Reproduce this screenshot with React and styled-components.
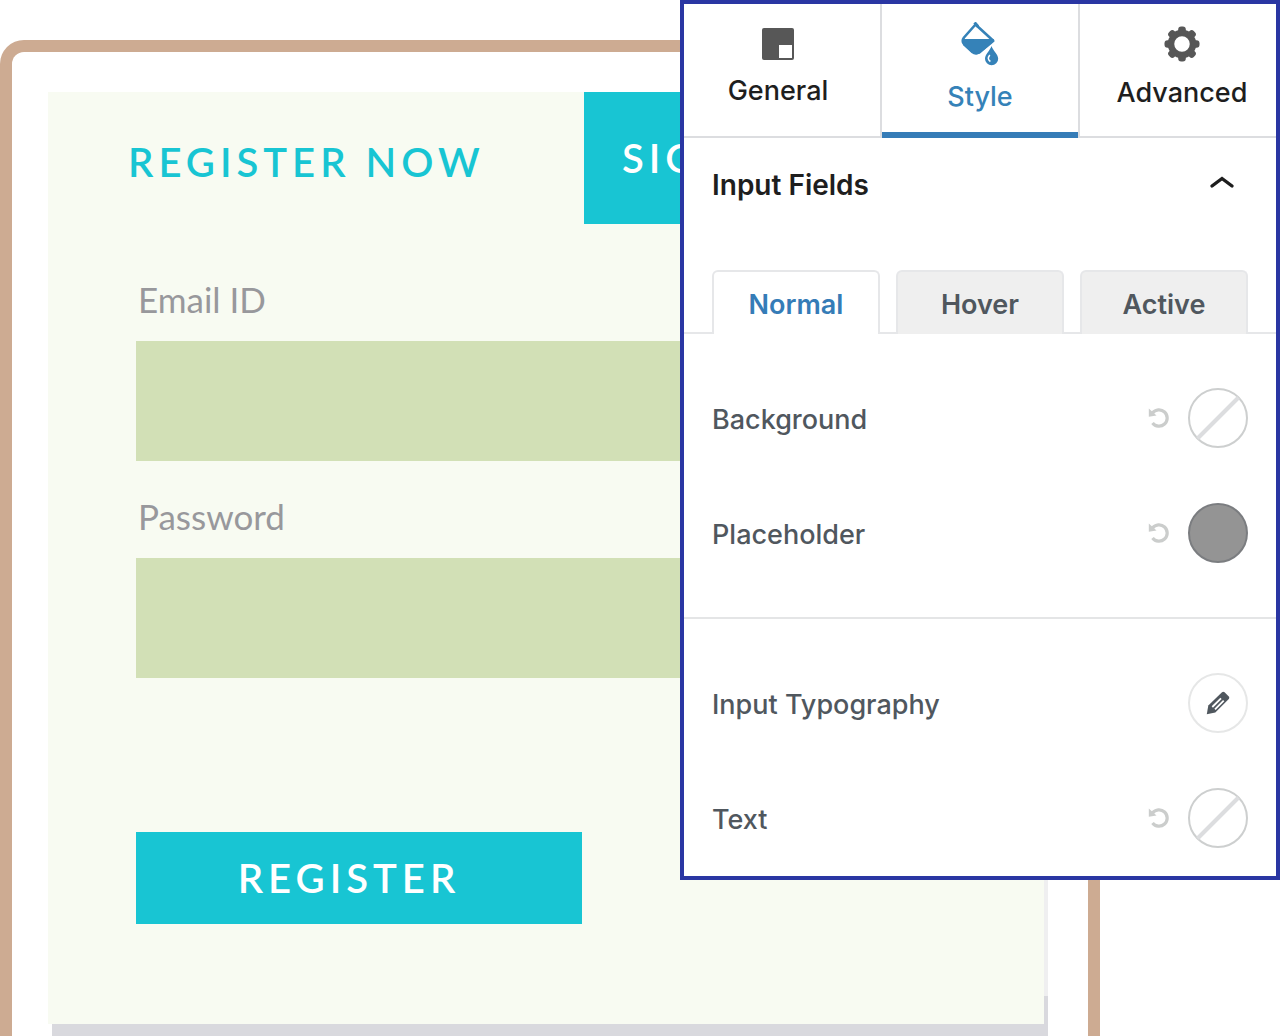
import React, { useState } from "react";
import styled, { createGlobalStyle, css } from "styled-components";

const GlobalStyle = createGlobalStyle`
  *, *::before, *::after { box-sizing: border-box; }
  body { margin: 0; background: #fff; }
  button, input { font: inherit; }
`;

const Page = styled.main`
  position: relative;
  display: flex;
  min-height: 100vh;
  padding: 40px 180px 0 0;
`;

const Frame = styled.section`
  flex: 1;
  display: flex;
  flex-direction: column;
  padding: 40px 40px 0 36px;
  border: 12px solid #cdab92;
  border-bottom: 0;
  border-radius: 24px 24px 0 0;
  font-family: Lato, sans-serif;
`;

const Sheet = styled.div`
  display: flex;
`;

const Form = styled.form`
  flex: 1;
  padding-bottom: 100px;
  background: #f8fbf2;
`;

const Edge = styled.div`
  width: 4px;
  background: linear-gradient(to top, #d9d9de 28px, #efeff0 28px);
`;

const SheetBase = styled.div`
  flex: 1;
  min-height: 12px;
  margin-left: 4px;
  background: #d9d9de;
`;

const FormTabs = styled.div`
  display: flex;
  height: 132px;
`;

const caps = css`
  font-size: 40px;
  font-weight: 600;
  line-height: 48px;
  letter-spacing: 5px;
  white-space: nowrap;
`;

const FormTab = styled.button`
  ${caps}
  flex: ${(p) => (p.$selected ? "1" : "0 0 536px")};
  padding: ${(p) => (p.$selected ? "0 40px 0 38px" : "8px 0 0 80px")};
  border: 0;
  text-align: left;
  color: ${(p) => (p.$selected ? "#fff" : "#18c5d3")};
  background: ${(p) => (p.$selected ? "#18c5d3" : "transparent")};
`;

const Fields = styled.div`
  display: grid;
  gap: 36px;
  padding: 56px 88px 0;
`;

const Field = styled.div`
  display: flex;
  flex-direction: column;
  gap: 23px;
`;

const FieldLabel = styled.label`
  padding-left: 2px;
  font-size: 35px;
  line-height: 38px;
  color: #98989c;
`;

const FieldInput = styled.input`
  width: 100%;
  height: 120px;
  padding: 0 32px;
  border: 0;
  border-radius: 0;
  font-size: 35px;
  background: #d2e0b6;
`;

const Submit = styled.button`
  ${caps}
  width: 446px;
  height: 92px;
  margin: 154px 0 0 88px;
  padding: 0 20px 0 0;
  border: 0;
  color: #fff;
  background: #18c5d3;
`;

const Panel = styled.aside`
  position: absolute;
  top: 0;
  right: 0;
  width: 600px;
  border: 4px solid #2a36a3;
  background: #fff;
  font-family: Inter, sans-serif;
  font-size: 27px;
  line-height: 34px;
`;

const PanelTabs = styled.div`
  display: grid;
  grid-template-columns: 198fr 198fr 196fr;
  height: 134px;
`;

const PanelTab = styled.button`
  display: flex;
  flex-direction: column;
  align-items: center;
  justify-content: center;
  gap: 14px;
  padding: 0 0 6px;
  border: 0;
  border-right: 2px solid #dcdde0;
  font-weight: 500;
  color: ${(p) => (p.$selected ? "#3582b8" : "#1e1e1e")};
  background: #fff;
  box-shadow: inset 0 ${(p) => (p.$selected ? "-6px #357cb7" : "-2px #dcdde0")};

  &:first-child { padding-right: 8px; }
  &:last-child { padding-left: 8px; border-right: 0; }
`;

const SectionToggle = styled.button`
  display: flex;
  align-items: center;
  justify-content: space-between;
  width: 100%;
  height: 94px;
  padding: 0 41px 0 28px;
  border: 0;
  font-size: 28px;
  font-weight: 600;
  color: #1e1e1e;
  background: transparent;
`;

const StateTabs = styled.div`
  display: flex;
  gap: 16px;
  margin-top: 38px;
  padding: 0 28px;
  box-shadow: inset 0 -2px #e6e7e9;
`;

const StateTab = styled.button`
  flex: 1;
  height: 64px;
  padding: 3px 0 0;
  border: 2px solid #e6e7e9;
  border-bottom: 0;
  border-radius: 6px 6px 0 0;
  font-weight: 600;
  color: ${(p) => (p.$selected ? "#357cb7" : "#50575e")};
  background: ${(p) => (p.$selected ? "#fff" : "#efefef")};
`;

const Group = styled.div`
  display: grid;
  gap: 55px;
  padding: 54px 28px;

  & + & {
    padding-bottom: 28px;
    border-top: 2px solid #e4e5e6;
  }
`;

const Setting = styled.div`
  display: flex;
  align-items: center;
  gap: 18px;
  height: 60px;
`;

const SettingName = styled.span`
  flex: 1;
  padding-top: 3px;
  font-weight: 500;
  color: #50575e;
`;

const ResetButton = styled.button`
  display: flex;
  padding: 0;
  border: 0;
  background: transparent;
`;

const RoundButton = styled.button`
  display: grid;
  place-items: center;
  width: 60px;
  height: 60px;
  padding: 0;
  border: 2px solid ${(p) => p.$ring};
  border-radius: 50%;
  background: ${(p) => p.$fill || "#fff"};
`;

const LayoutIcon = () => (
  <svg width="32" height="32" viewBox="0 0 32 32" aria-hidden="true">
    <rect width="32" height="32" rx="2" fill="#575757" />
    <rect x="17" y="17" width="13" height="13" fill="#fff" />
  </svg>
);

const BucketIcon = () => (
  <svg width="40" height="44" viewBox="0 0 40 44" aria-hidden="true">
    <path d="M15.500 2.500 33 18.500 19.500 30Q16 32 12.500 29.500L4 22Q1.500 19 4 15.500Z" fill="none" stroke="#3582b8" strokeWidth="2.600" strokeLinejoin="round" />
    <path d="M2.500 17H33.500L34.500 19.500 20 31.500Q15.500 34 11.500 31L3.500 23.500Z" fill="#3582b8" />
    <path d="M14.500.500 18 4.500" stroke="#3582b8" strokeWidth="3" />
    <path d="M31.500 24C30 28.500 25 32.500 25 36.700a6.600 6.500 0 0 0 13.200 0C38.200 32.500 33 28.500 31.500 24Z" fill="#3582b8" />
    <path d="M29.800 33q-3.200 4 .6 6.500" fill="none" stroke="#fff" strokeWidth="1.500" />
  </svg>
);

const GearIcon = () => (
  <svg width="36" height="36" viewBox="0 0 36 36" aria-hidden="true">
    <circle cx="18" cy="18" r="11" fill="none" stroke="#575757" strokeWidth="6.500" />
    {[0, 45, 90, 135, 180, 225, 270, 315].map((angle) => (
      <rect key={angle} x="14.200" y="0.500" width="7.600" height="8" rx="3" fill="#575757" transform={`rotate(${angle} 18 18)`} />
    ))}
  </svg>
);

const ChevronIcon = () => (
  <svg width="26" height="20" viewBox="0 0 26 20" aria-hidden="true">
    <path d="m3 11 10-7.500 10 7.500" fill="none" stroke="#1e1e1e" strokeWidth="3.400" strokeLinecap="round" />
  </svg>
);

const ResetIcon = () => (
  <svg width="22" height="22" viewBox="0 0 22 22" aria-hidden="true">
    <path d="M4.500 6A8.200 8.200 0 1 1 4.500 16" fill="none" stroke="#cbcdcc" strokeWidth="3.200" />
    <path d="M.8 1.500V9.800L8.500 8.500Z" fill="#cbcdcc" />
  </svg>
);

const PencilIcon = () => (
  <svg width="24" height="24" viewBox="0 0 24 24" aria-hidden="true">
    <path d="m.8 23.300 1.500-8.800L16 1.300q1.300-1 2.600 0l4.200 4.200q1.100 1.300 0 2.500L9.300 21.500Z" fill="#50575e" />
    <path d="m6.300 16 8.700-8.700M9 18.300l8.700-8.700" stroke="#fff" strokeWidth="1.800" />
  </svg>
);

const NoColorIcon = () => (
  <svg width="56" height="56" viewBox="0 0 56 56" aria-hidden="true">
    <path d="M7.500 48.500 48.500 7.500" stroke="#dcdddf" strokeWidth="4" />
  </svg>
);

const panelTabs = [
  ["General", LayoutIcon],
  ["Style", BucketIcon],
  ["Advanced", GearIcon],
];

function ColorSetting({ name, color }) {
  return (
    <Setting>
      <SettingName>{name}</SettingName>
      <ResetButton type="button" aria-label={`Reset ${name}`}>
        <ResetIcon />
      </ResetButton>
      <RoundButton
        type="button"
        aria-label={`${name} color`}
        $ring={color ? "#7b7d80" : "#cdcfcf"}
        $fill={color}
      >
        {!color && <NoColorIcon />}
      </RoundButton>
    </Setting>
  );
}

export default function App() {
  const [panelTab, setPanelTab] = useState("Style");
  const [stateTab, setStateTab] = useState("Normal");
  const [open, setOpen] = useState(true);

  return (
    <>
      <GlobalStyle />
      <Page>
        <Frame>
          <Sheet>
            <Form onSubmit={(e) => e.preventDefault()}>
              <FormTabs>
                <FormTab type="button">REGISTER NOW</FormTab>
                <FormTab type="button" $selected>SIG</FormTab>
              </FormTabs>
              <Fields>
                <Field>
                  <FieldLabel htmlFor="email">Email ID</FieldLabel>
                  <FieldInput id="email" type="email" />
                </Field>
                <Field>
                  <FieldLabel htmlFor="password">Password</FieldLabel>
                  <FieldInput id="password" type="password" />
                </Field>
              </Fields>
              <Submit type="submit">REGISTER</Submit>
            </Form>
            <Edge />
          </Sheet>
          <SheetBase />
        </Frame>

        <Panel>
          <PanelTabs role="tablist">
            {panelTabs.map(([name, Icon]) => (
              <PanelTab
                key={name}
                type="button"
                role="tab"
                aria-selected={panelTab === name}
                $selected={panelTab === name}
                onClick={() => setPanelTab(name)}
              >
                <Icon />
                {name}
              </PanelTab>
            ))}
          </PanelTabs>
          <SectionToggle type="button" aria-expanded={open} onClick={() => setOpen(!open)}>
            Input Fields
            <ChevronIcon />
          </SectionToggle>
          {open && (
            <>
              <StateTabs role="tablist">
                {["Normal", "Hover", "Active"].map((name) => (
                  <StateTab
                    key={name}
                    type="button"
                    role="tab"
                    aria-selected={stateTab === name}
                    $selected={stateTab === name}
                    onClick={() => setStateTab(name)}
                  >
                    {name}
                  </StateTab>
                ))}
              </StateTabs>
              <Group>
                <ColorSetting name="Background" />
                <ColorSetting name="Placeholder" color="#949494" />
              </Group>
              <Group>
                <Setting>
                  <SettingName>Input Typography</SettingName>
                  <RoundButton type="button" aria-label="Edit typography" $ring="#e6e7e7">
                    <PencilIcon />
                  </RoundButton>
                </Setting>
                <ColorSetting name="Text" />
              </Group>
            </>
          )}
        </Panel>
      </Page>
    </>
  );
}
